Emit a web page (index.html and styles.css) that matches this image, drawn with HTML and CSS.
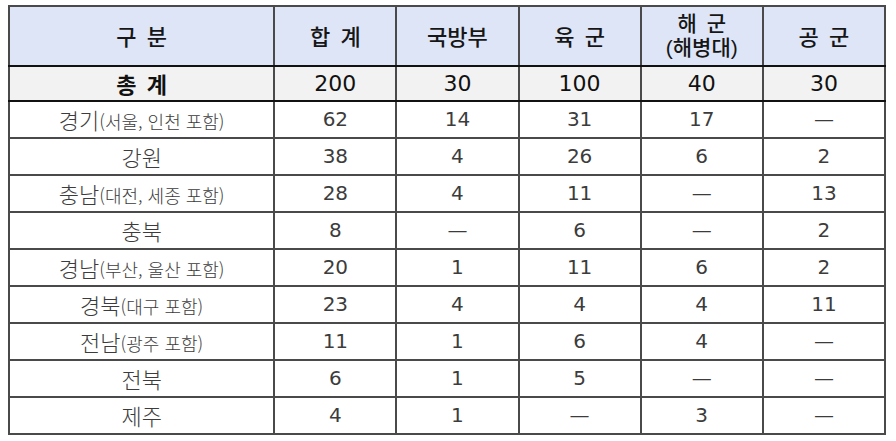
FILE: index.html
```html
<!DOCTYPE html>
<html lang="ko">
<head>
<meta charset="utf-8">
<link rel="stylesheet" href="styles.css">
</head>
<body>
<table class="stats">
  <colgroup>
    <col class="c-name"><col class="c-num"><col class="c-num"><col class="c-num"><col class="c-num"><col class="c-num">
  </colgroup>
  <thead>
    <tr class="head">
      <th>구 분</th><th>합 계</th><th>국방부</th><th>육 군</th><th class="two"><span class="line">해 군</span><span class="line">(해병대)</span></th><th>공 군</th>
    </tr>
  </thead>
  <tbody>
    <tr class="total"><td class="kr">총 계</td><td>200</td><td>30</td><td>100</td><td>40</td><td>30</td></tr>
    <tr><td class="kr">경기<span class="sub">(서울, 인천 포함)</span></td><td>62</td><td>14</td><td>31</td><td>17</td><td>—</td></tr>
    <tr><td class="kr">강원</td><td>38</td><td>4</td><td>26</td><td>6</td><td>2</td></tr>
    <tr><td class="kr">충남<span class="sub">(대전, 세종 포함)</span></td><td>28</td><td>4</td><td>11</td><td>—</td><td>13</td></tr>
    <tr><td class="kr">충북</td><td>8</td><td>—</td><td>6</td><td>—</td><td>2</td></tr>
    <tr><td class="kr">경남<span class="sub">(부산, 울산 포함)</span></td><td>20</td><td>1</td><td>11</td><td>6</td><td>2</td></tr>
    <tr><td class="kr">경북<span class="sub">(대구 포함)</span></td><td>23</td><td>4</td><td>4</td><td>4</td><td>11</td></tr>
    <tr><td class="kr">전남<span class="sub">(광주 포함)</span></td><td>11</td><td>1</td><td>6</td><td>4</td><td>—</td></tr>
    <tr><td class="kr">전북</td><td>6</td><td>1</td><td>5</td><td>—</td><td>—</td></tr>
    <tr><td class="kr">제주</td><td>4</td><td>1</td><td>—</td><td>3</td><td>—</td></tr>
  </tbody>
</table>
</body>
</html>
```
FILE: styles.css
```css
html, body {
  margin: 0;
  padding: 0;
  background: #ffffff;
}
body {
  padding: 5px 0 0 8px;
  font-family: "DejaVu Sans", "Noto Sans CJK KR", sans-serif;
}
.stats {
  border-collapse: collapse;
  table-layout: fixed;
  width: 878px;
  border: 2px solid #1a1a1a;
}
.c-name { width: 265px; }
.c-num { width: 122px; }
.stats th, .stats td {
  border: 2px solid #4a4a4a;
  text-align: center;
  vertical-align: middle;
  padding: 0;
  line-height: 1.15;
}
.head th {
  background: #dde5f6;
  height: 58px;
  font-family: "Noto Sans CJK KR", sans-serif;
  font-size: 22px;
  font-weight: 500;
  word-spacing: 4px;
  color: #161616;
  border-bottom: 2px solid #111;
}
.head th.two {
  font-family: "Liberation Sans", "Noto Sans CJK KR", sans-serif;
  font-size: 21px;
}
.line {
  display: block;
  line-height: 24px;
}
.total td {
  background: #f2f2f2;
  height: 33px;
  font-size: 22px;
  color: #111;
  border-bottom: 2px solid #111;
}
.total td.kr {
  font-family: "Noto Sans CJK KR", sans-serif;
  font-weight: 700;
  font-size: 22px;
  word-spacing: 4px;
}
tbody tr:not(.total) td {
  height: 35px;
  font-size: 20px;
  color: #3c3c3c;
}
tbody tr:not(.total) td.kr {
  font-family: "Noto Sans CJK KR", sans-serif;
  font-size: 22px;
  font-weight: 300;
}
.sub {
  font-size: 18px;
}
```
